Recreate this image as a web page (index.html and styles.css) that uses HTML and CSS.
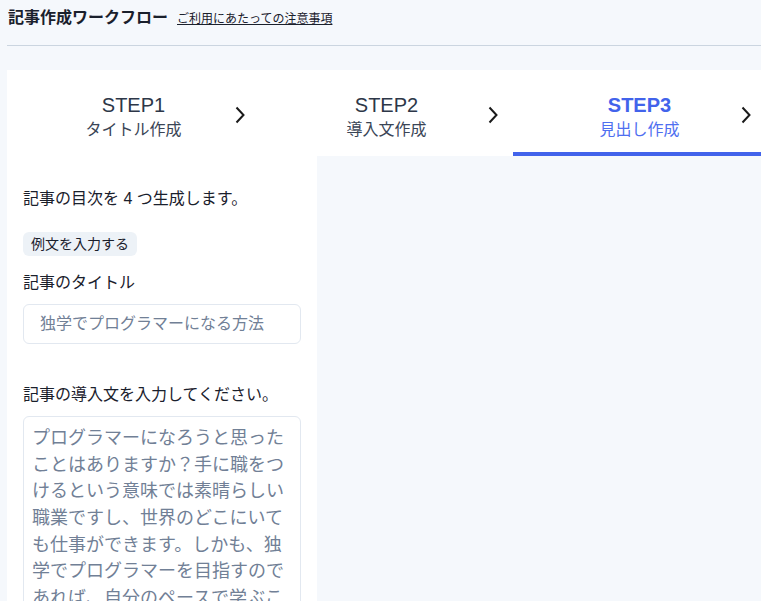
FILE: index.html
```html
<!DOCTYPE html>
<html lang="ja">
<head>
    <meta charset="UTF-8" />
    <meta name="viewport" content="width=device-width, initial-scale=1" />
    <title>記事作成ワークフロー</title>
    <link rel="stylesheet" href="styles.css">
</head>
<body>
    <header class="cabecalho">
        <h1>記事作成ワークフロー</h1>
        <a href="#" class="aviso">ご利用にあたっての注意事項</a>
    </header>

    <div class="painel">
        <nav class="passos">
            <div class="passo">
                <div class="passo-num">STEP1</div>
                <div class="passo-nome">タイトル作成</div>
                <svg class="seta" width="10" height="18" viewBox="0 0 10 18"><polyline points="1.5,1.5 8.5,9 1.5,16.5" /></svg>
            </div>
            <div class="passo">
                <div class="passo-num">STEP2</div>
                <div class="passo-nome">導入文作成</div>
                <svg class="seta" width="10" height="18" viewBox="0 0 10 18"><polyline points="1.5,1.5 8.5,9 1.5,16.5" /></svg>
            </div>
            <div class="passo ativo">
                <div class="passo-num">STEP3</div>
                <div class="passo-nome">見出し作成</div>
                <svg class="seta" width="10" height="18" viewBox="0 0 10 18"><polyline points="1.5,1.5 8.5,9 1.5,16.5" /></svg>
            </div>
        </nav>

        <div class="conteudo">
            <form class="formulario">
                <p class="descricao">記事の目次を 4 つ生成します。</p>
                <button type="button" class="exemplo">例文を入力する</button>

                <label for="titulo">記事のタイトル</label>
                <input type="text" id="titulo" placeholder="独学でプログラマーになる方法" />

                <label for="introducao" class="segundo">記事の導入文を入力してください。</label>
                <textarea id="introducao" placeholder="プログラマーになろうと思ったことはありますか？手に職をつけるという意味では素晴らしい職業ですし、世界のどこにいても仕事ができます。しかも、独学でプログラマーを目指すのであれば、自分のペースで学ぶことができます。"></textarea>
            </form>
            <div class="resultado"></div>
        </div>
    </div>
</body>
</html>
```

FILE: styles.css
```css
* {
    box-sizing: border-box;
}
html, body {
    overflow: hidden;
}
body {
    margin: 0;
    background-color: #f5f8fc;
    color: #1a202c;
    font-family: "Liberation Sans", "Noto Sans CJK JP", sans-serif;
}
.cabecalho {
    display: flex;
    align-items: baseline;
    gap: 9px;
    height: 46px;
    margin-left: 7px;
    padding: 7px 0 0 1px;
    border-bottom: 1px solid #cbd5e0;
}
h1 {
    margin: 0;
    font-size: 16px;
    line-height: 22px;
    font-weight: bold;
}
.aviso {
    font-size: 12px;
    color: #1a202c;
}
.painel {
    margin: 24px 0 0 7px;
    overflow: hidden;
}
.passos {
    display: grid;
    grid-template-columns: repeat(3, 253px);
    background-color: white;
}
.passo {
    position: relative;
    height: 86px;
    padding-top: 23px;
    text-align: center;
    border-bottom: 4px solid transparent;
    color: #2d3748;
}
.passo-num {
    font-size: 20px;
    line-height: 24px;
}
.passo-nome {
    font-size: 16px;
    line-height: 26px;
    color: #3a4556;
}
.passo.ativo {
    border-bottom-color: #4263eb;
    color: #4263eb;
}
.passo.ativo .passo-num {
    font-weight: bold;
}
.passo.ativo .passo-nome {
    color: #4f6ff0;
}
.seta {
    position: absolute;
    right: 15px;
    top: 36px;
}
.seta polyline {
    fill: none;
    stroke: #1a1a1a;
    stroke-width: 2;
}
.conteudo {
    display: flex;
}
.formulario {
    display: flex;
    flex-direction: column;
    align-items: flex-start;
    width: 310px;
    height: 460px;
    padding: 31px 16px 0;
    background-color: white;
}
.formulario > * {
    flex-shrink: 0;
}
.descricao {
    margin: 0;
    font-size: 16px;
    line-height: 24px;
}
.exemplo {
    margin-top: 21px;
    height: 24px;
    padding: 0 8px;
    border: none;
    border-radius: 6px;
    background-color: #edf2f7;
    color: #1a202c;
    font-family: inherit;
    font-size: 14px;
    line-height: 24px;
}
label {
    margin-top: 15px;
    font-size: 16px;
    line-height: 24px;
}
label.segundo {
    margin-top: 39px;
}
input, textarea {
    width: 278px;
    margin-top: 9px;
    border: 1px solid #e2e8f0;
    border-radius: 6px;
    background: white;
    font-family: inherit;
    color: #1a202c;
}
input {
    height: 40px;
    padding: 0 16px;
    font-size: 16px;
}
textarea {
    height: 240px;
    padding: 8px 8px;
    font-size: 18px;
    line-height: 26.67px;
    resize: none;
}
input::placeholder, textarea::placeholder {
    color: #718096;
    opacity: 1;
}
.resultado {
    flex: 1;
}
```
